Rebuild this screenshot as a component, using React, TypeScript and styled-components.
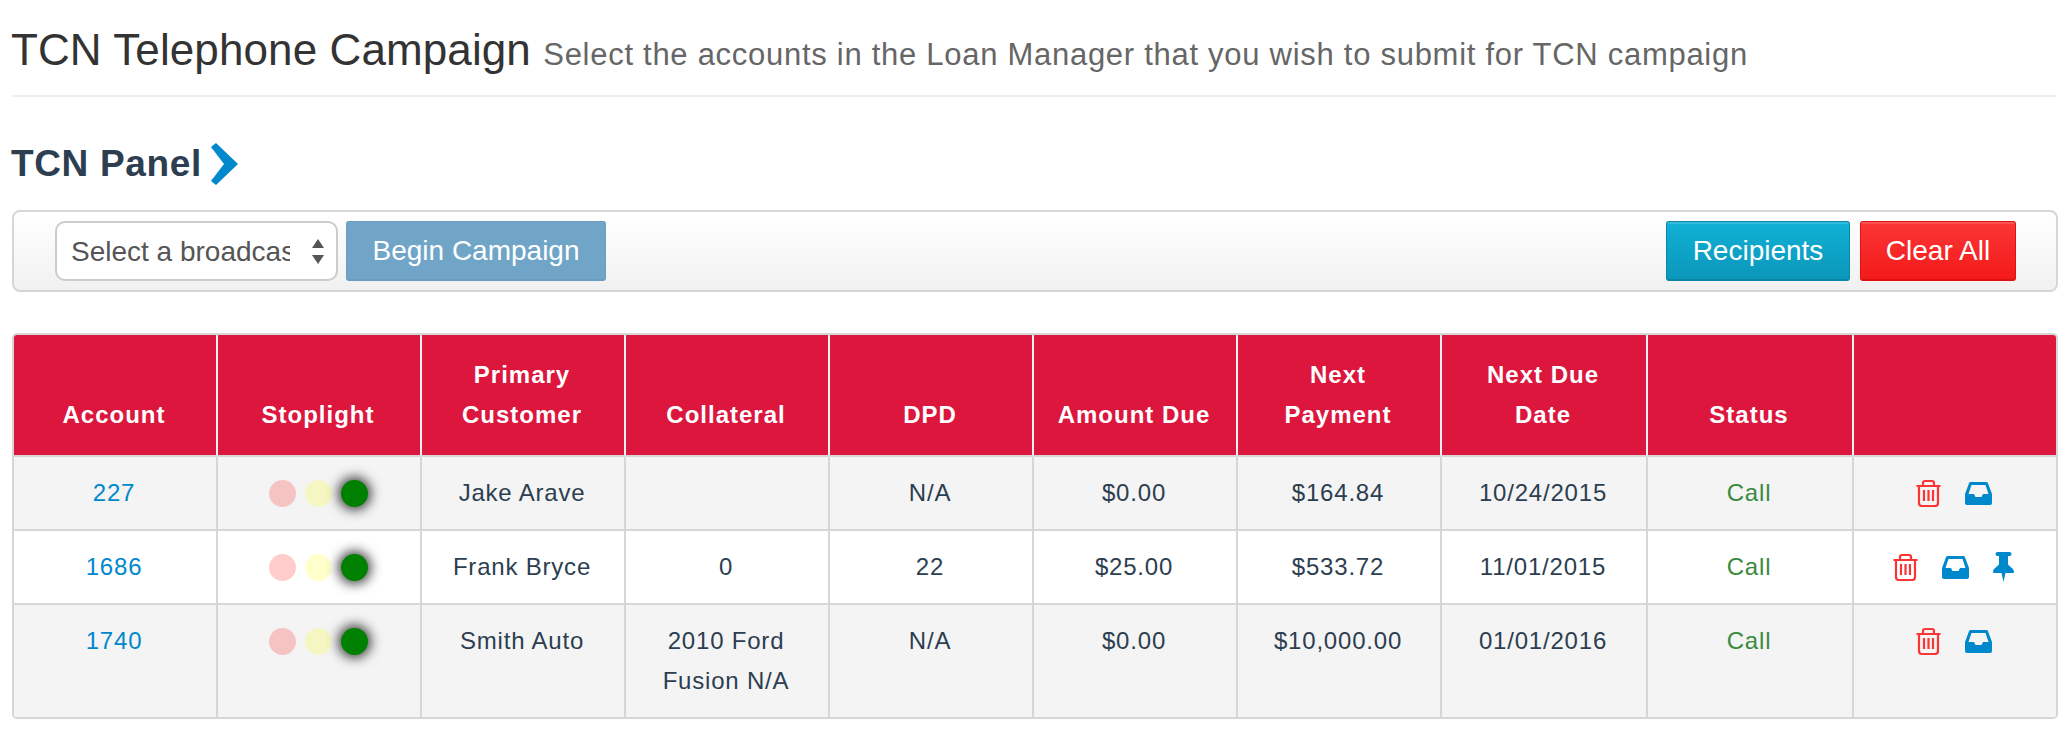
import React from "react";
import styled, { createGlobalStyle } from "styled-components";

interface IAccount {
  id: string;
  customer: string;
  collateral: React.ReactNode;
  dpd: string;
  amountDue: string;
  nextPayment: string;
  nextDue: string;
  pinned?: boolean;
}

const accounts: IAccount[] = [
  { id: "227", customer: "Jake Arave", collateral: "", dpd: "N/A", amountDue: "$0.00", nextPayment: "$164.84", nextDue: "10/24/2015" },
  { id: "1686", customer: "Frank Bryce", collateral: "0", dpd: "22", amountDue: "$25.00", nextPayment: "$533.72", nextDue: "11/01/2015", pinned: true },
  { id: "1740", customer: "Smith Auto", collateral: "2010 Ford Fusion N/A", dpd: "N/A", amountDue: "$0.00", nextPayment: "$10,000.00", nextDue: "01/01/2016" },
];

const columnWidths = [204, 204, 204, 204, 204, 204, 204, 206, 206, 203];

const GlobalStyle = createGlobalStyle`
  body {
    margin: 0;
    background: #fff;
    font-family: "Liberation Sans", Arial, sans-serif;
    color: #2c3e50;
  }
`;

const Page = styled.div`
  padding: 22px 9px 0 12px;
`;

const PageHeader = styled.header`
  padding-bottom: 17px;
  border-bottom: 2px solid #eee;
  margin-right: 2px;
`;

const Title = styled.h1`
  margin: 0 0 0 -1px;
  font-size: 44px;
  line-height: 56px;
  font-weight: 400;
  letter-spacing: 0.1px;
  color: #333;
  white-space: nowrap;

  small {
    font-size: 31px;
    line-height: 1;
    letter-spacing: 0.72px;
    color: #666;
  }
`;

const PanelTitle = styled.h2`
  display: flex;
  align-items: center;
  gap: 9px;
  margin: 45px 0 24px -1px;
  font-size: 37px;
  line-height: 44px;
  font-weight: 700;
  letter-spacing: 0.65px;
  color: #2c3e50;
`;

const Toolbar = styled.div`
  display: flex;
  align-items: center;
  justify-content: space-between;
  height: 82px;
  box-sizing: border-box;
  padding: 0 40px 0 41px;
  border: 2px solid #d6d6d6;
  border-radius: 8px;
  background: linear-gradient(#fff, #f1f1f1);
`;

const ToolbarGroup = styled.div<{ $gap: number }>`
  display: flex;
  align-items: center;
  gap: ${(p) => p.$gap}px;
`;

const SelectWrap = styled.div`
  position: relative;
  width: 283px;
  height: 60px;

  &::before,
  &::after {
    content: "";
    position: absolute;
    right: 14px;
    border-left: 6px solid transparent;
    border-right: 6px solid transparent;
    pointer-events: none;
  }

  &::before {
    top: 18px;
    border-bottom: 9px solid #555;
  }

  &::after {
    bottom: 17px;
    border-top: 9px solid #555;
  }
`;

const BroadcastSelect = styled.select`
  appearance: none;
  width: 100%;
  height: 100%;
  box-sizing: border-box;
  padding: 0 46px 0 14px;
  border: 2px solid #ccc;
  border-radius: 10px;
  background: #fff;
  font-family: inherit;
  font-size: 28px;
  color: #555;
`;

const Button = styled.button<{ $top: string; $bottom: string; $edge: string; $width: number; $faded?: boolean }>`
  width: ${(p) => p.$width}px;
  height: 60px;
  padding: 0;
  border: 1px solid ${(p) => p.$edge};
  border-bottom-width: 2px;
  border-radius: 3px;
  background: linear-gradient(${(p) => p.$top}, ${(p) => p.$bottom});
  box-shadow: ${(p) => (p.$faded ? "none" : "inset 0 2px 0 rgba(255, 255, 255, 0.15)")};
  font-family: inherit;
  font-size: 28px;
  color: #fff;
  cursor: pointer;
`;

const TableFrame = styled.div`
  margin-top: 41px;
  border: 2px solid #d6d6d6;
  border-radius: 5px;
  overflow: hidden;
`;

const AccountsTable = styled.table`
  width: 100%;
  table-layout: fixed;
  border-collapse: separate;
  border-spacing: 0;
`;

const HeadCell = styled.th`
  padding: 0 9px 20px 7px;
  height: 122px;
  box-sizing: border-box;
  vertical-align: bottom;
  background: #dc163d;
  border-right: 2px solid #f3f3f3;
  border-bottom: 2px solid #d6d6d6;
  color: #fff;
  font-size: 24px;
  line-height: 40px;
  letter-spacing: 1px;
  font-weight: 700;
  text-align: center;

  &:last-child {
    border-right: 0;
  }
`;

const Row = styled.tr<{ $striped: boolean }>`
  background: ${(p) => (p.$striped ? "#f4f4f4" : "#fff")};

  &:last-child td {
    border-bottom: 0;
  }
`;

const Cell = styled.td`
  padding: 16px 9px 16px 7px;
  vertical-align: top;
  border-right: 2px solid #d6d6d6;
  border-bottom: 2px solid #d6d6d6;
  font-size: 24px;
  line-height: 40px;
  letter-spacing: 0.8px;
  text-align: center;

  &:last-child {
    border-right: 0;
  }
`;

const AccountLink = styled.a`
  color: #0088cc;
  text-decoration: none;
`;

const Status = styled.span`
  color: #3a8a3e;
`;

const Stoplight = styled.div`
  display: flex;
  align-items: center;
  justify-content: center;
  gap: 9px;
  height: 40px;
`;

const Lamp = styled.span<{ $color: string; $on?: boolean }>`
  width: 27px;
  height: 27px;
  border-radius: 50%;
  background: ${(p) => p.$color};
  opacity: ${(p) => (p.$on ? 1 : 0.2)};
  box-shadow: ${(p) => (p.$on ? "0 0 12px 3px rgba(0, 0, 0, 0.75)" : "none")};
`;

const Actions = styled.div`
  display: flex;
  align-items: center;
  justify-content: center;
  gap: 24px;
  height: 40px;
  padding-right: 2px;
`;

const TrashIcon = () => (
  <svg width="25" height="28" viewBox="0 0 25 28" fill="none" stroke="#f93535" strokeWidth="2.2">
    <path d="M0.5 7H24.5M7 7V4a2 2 0 0 1 2-2h7a2 2 0 0 1 2 2v3M3 7v17a3 3 0 0 0 3 3h13a3 3 0 0 0 3-3V7" />
    <path d="M8 11v11M12.5 11v11M17 11v11" />
  </svg>
);

const InboxIcon = () => (
  <svg width="27" height="23" viewBox="0 0 27 23" fill="#0088cc">
    <path
      fillRule="evenodd"
      d="M6 0h15a2 2 0 0 1 2 1.3L27 12v9a2 2 0 0 1-2 2H2a2 2 0 0 1-2-2v-9L4 1.3A2 2 0 0 1 6 0zM6.5 3L3.5 12H9l1.5 3h6l1.5-3h5.5L20.5 3z"
    />
  </svg>
);

const PinIcon = () => (
  <svg width="21" height="30" viewBox="0 0 21 30" fill="#0088cc">
    <path d="M4.5 0h12a2 2 0 0 1 0 4H15v8c0 2 6 4 6 8a1 1 0 0 1-1 1h-7.5L10.5 30 8.5 21H1a1 1 0 0 1-1-1c0-4 6-6 6-8V4H4.5a2 2 0 0 1 0-4z" />
  </svg>
);

const Chevron = () => (
  <svg width="27" height="42" viewBox="0 0 27 42" fill="#0088cc">
    <path d="M5 0L27 21 5 42 0 38 13 21 0 4z" />
  </svg>
);

const App: React.FC = () => (
  <Page>
    <GlobalStyle />
    <PageHeader>
      <Title>
        TCN Telephone Campaign{" "}
        <small>Select the accounts in the Loan Manager that you wish to submit for TCN campaign</small>
      </Title>
    </PageHeader>

    <PanelTitle>
      TCN Panel
      <Chevron />
    </PanelTitle>

    <Toolbar>
      <ToolbarGroup $gap={8}>
        <SelectWrap>
          <BroadcastSelect defaultValue="">
            <option value="">Select a broadcast</option>
          </BroadcastSelect>
        </SelectWrap>
        <Button $width={260} $top="#70a5c8" $bottom="#70a5c8" $edge="#6a9dbf" $faded>
          Begin Campaign
        </Button>
      </ToolbarGroup>
      <ToolbarGroup $gap={10}>
        <Button $width={184} $top="#10b1d6" $bottom="#0b97ba" $edge="#0a87a7">
          Recipients
        </Button>
        <Button $width={156} $top="#fb3636" $bottom="#f41a1a" $edge="#df1111">
          Clear All
        </Button>
      </ToolbarGroup>
    </Toolbar>

    <TableFrame>
      <AccountsTable>
        <colgroup>
          {columnWidths.map((w, i) => (
            <col key={i} style={{ width: w }} />
          ))}
        </colgroup>
        <thead>
          <tr>
            <HeadCell>Account</HeadCell>
            <HeadCell>Stoplight</HeadCell>
            <HeadCell>
              Primary
              <br />
              Customer
            </HeadCell>
            <HeadCell>Collateral</HeadCell>
            <HeadCell>DPD</HeadCell>
            <HeadCell>Amount Due</HeadCell>
            <HeadCell>
              Next
              <br />
              Payment
            </HeadCell>
            <HeadCell>
              Next Due
              <br />
              Date
            </HeadCell>
            <HeadCell>Status</HeadCell>
            <HeadCell />
          </tr>
        </thead>
        <tbody>
          {accounts.map((a, i) => (
            <Row key={a.id} $striped={i % 2 === 0}>
              <Cell>
                <AccountLink href="#">{a.id}</AccountLink>
              </Cell>
              <Cell>
                <Stoplight>
                  <Lamp $color="#ff0000" />
                  <Lamp $color="#ffff00" />
                  <Lamp $color="#008000" $on />
                </Stoplight>
              </Cell>
              <Cell>{a.customer}</Cell>
              <Cell>{a.collateral}</Cell>
              <Cell>{a.dpd}</Cell>
              <Cell>{a.amountDue}</Cell>
              <Cell>{a.nextPayment}</Cell>
              <Cell>{a.nextDue}</Cell>
              <Cell>
                <Status>Call</Status>
              </Cell>
              <Cell>
                <Actions>
                  <TrashIcon />
                  <InboxIcon />
                  {a.pinned && <PinIcon />}
                </Actions>
              </Cell>
            </Row>
          ))}
        </tbody>
      </AccountsTable>
    </TableFrame>
  </Page>
);

export default App;
